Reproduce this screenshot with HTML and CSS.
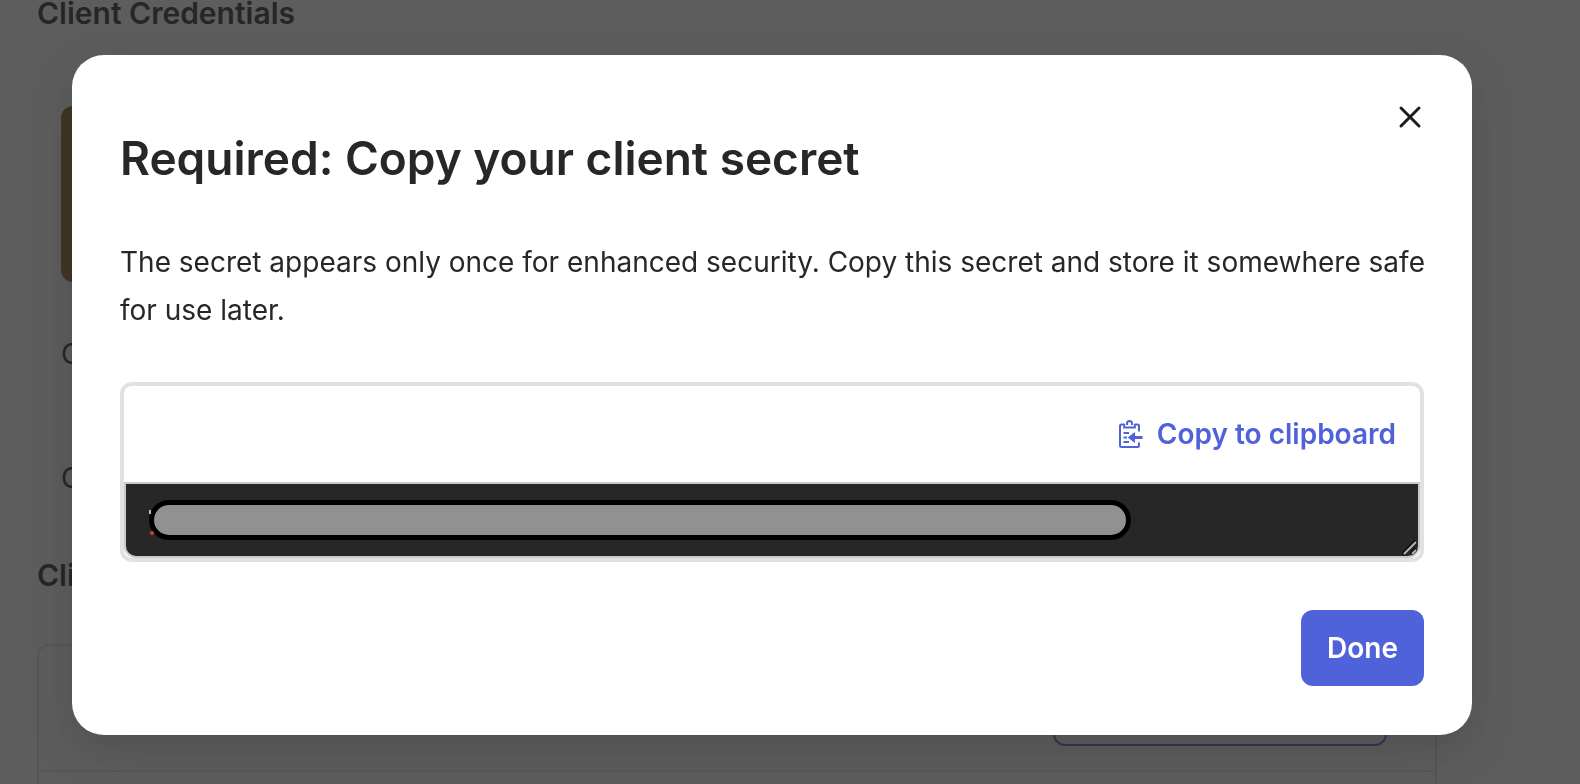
FILE: index.html
```
<!DOCTYPE html>
<html lang="en">
<head>
    <meta charset="UTF-8">
    <meta name="viewport" content="width=device-width, initial-scale=1.0">
    <title>Client Credentials</title>
    <link rel="stylesheet" href="styles.css">
</head>
<body>

    <!-- Page behind the dialog -->
    <main class="page">
        <h2 class="section-title">Client Credentials</h2>
        <div class="credentials">
            <div class="notice"></div>
            <div class="field">Client ID</div>
            <div class="field">Client secret</div>
        </div>

        <h2 class="section-title">Client Secrets</h2>
        <div class="panel">
            <div class="panel-head">
                <button class="outline-button" type="button" aria-label="New secret"></button>
            </div>
        </div>
    </main>

    <!-- Secret dialog -->
    <div class="overlay">
        <div class="modal" role="dialog" aria-modal="true" aria-labelledby="modalTitle">
            <div class="modal-top">
                <button class="close-button" type="button" aria-label="Close">
                    <svg width="24" height="24" viewBox="0 0 24 24" fill="none" stroke="currentColor" stroke-width="3" stroke-linecap="round">
                        <path d="M3 3l18 18M21 3l-18 18"/>
                    </svg>
                </button>
            </div>
            <h1 class="modal-title" id="modalTitle">Required: Copy your client secret</h1>
            <p class="modal-text">The secret appears only once for enhanced security. Copy this secret and store it somewhere safe for use later.</p>

            <div class="secret-box">
                <div class="secret-toolbar">
                    <button class="copy-button" type="button">
                        <svg width="24" height="28" viewBox="0 0 24 28" fill="none" stroke="currentColor" stroke-width="2">
                            <path d="M5.5 4.5H2.5Q1 4.5 1 6V25.5Q1 27 2.5 27H18.5Q20 27 20 25.5V22.5M15.5 4.5H18.5Q20 4.5 20 6V11.5"/>
                            <path d="M5.2 4V7.5H15.8V4"/>
                            <path d="M8 5V3.5Q8 1 10.5 1T13 3.500V5"/>
                            <path d="M4.5 13h5.5M4.5 17.5h3.5M4.5 22h5.5"/>
                            <path d="M23.5 17.5H15" stroke-width="3"/>
                            <path d="M8.7 17.5L16 12V23Z" fill="currentColor" stroke="none"/>
                        </svg>
                        Copy to clipboard
                    </button>
                </div>
                <div class="secret-value">
                    <textarea class="secret-input" rows="1" aria-label="Client secret" readonly></textarea>
                    <span class="secret-mask"></span>
                    <svg class="resize-grip" width="16" height="16" viewBox="0 0 16 16" fill="none">
                        <path d="M1 14L14 1M9 14L14 9" stroke="#111" stroke-width="4"/>
                        <path d="M2 14L14 2M10 14L14 10" stroke="#b4b4b4" stroke-width="2"/>
                    </svg>
                </div>
            </div>

            <div class="modal-actions">
                <button class="done-button" type="button">Done</button>
            </div>
        </div>
    </div>

</body>
</html>
```
FILE: styles.css
```
* {
    box-sizing: border-box;
}

body {
    margin: 0;
    height: 100vh;
    overflow: hidden;
    background: #fff;
    color: #272727;
    font-family: Inter, "Liberation Sans", sans-serif;
    font-size: 28px;
}

button {
    font: inherit;
    cursor: pointer;
}

/* Page behind the dialog */
.page {
    height: 100vh;
    padding: 0 143px 0 37px;
    overflow: hidden;
}

.section-title {
    margin: 0;
    font-size: 30px;
    font-weight: 600;
    line-height: 26px;
}

.credentials {
    padding: 80px 24px 72px;
}

.notice {
    height: 176px;
    margin-bottom: 52px;
    border-radius: 12px;
    background: #8b611f;
}

.field {
    height: 124px;
    line-height: 40px;
}

.field:last-child {
    height: 32px;
}

.panel {
    height: 200px;
    margin-top: 56px;
    border: 2px solid #e1e1e1;
    border-radius: 12px;
}

.panel-head {
    display: flex;
    justify-content: flex-end;
    padding: 24px 48px;
    border-bottom: 2px solid #e1e1e1;
}

.outline-button {
    width: 334px;
    height: 76px;
    border: 2px solid #4f62d9;
    border-radius: 12px;
    background: #fff;
}

/* Dialog */
.overlay {
    position: fixed;
    inset: 0;
    padding: 55px 108px 49px 72px;
    background: rgba(39, 39, 39, 0.75);
}

.modal {
    padding: 48px 48px 49px;
    border-radius: 32px;
    background: #fff;
    box-shadow: 0 16px 48px rgba(0, 0, 0, 0.15);
}

.modal-top {
    display: flex;
    justify-content: flex-end;
    height: 27px;
}

.close-button {
    display: flex;
    align-items: center;
    height: 28px;
    padding: 2px;
    border: none;
    background: none;
    color: #1d1d21;
}

.modal-title {
    margin: 0 0 52px;
    font-size: 46px;
    font-weight: 600;
    line-height: 56px;
}

.modal-text {
    margin: 0 -8px 48px 0;
    line-height: 48px;
}

.secret-box {
    border: 4px solid #e1e1e1;
    border-radius: 12px;
}

.secret-toolbar {
    display: flex;
    align-items: center;
    justify-content: flex-end;
    height: 96px;
    padding: 0 24px;
}

.copy-button {
    display: flex;
    align-items: center;
    gap: 14px;
    padding: 0;
    border: none;
    background: none;
    color: #4f62d9;
    font-weight: 600;
}

.secret-value {
    position: relative;
}

.secret-input {
    display: block;
    width: 100%;
    height: 76px;
    padding: 16px 24px;
    border: 2px solid #cacaca;
    border-radius: 0 0 12px 12px;
    background: #272727;
    color: #fff;
    font: inherit;
    outline: none;
    resize: none;
}

/* Covers the secret */
.secret-mask {
    position: absolute;
    top: 18px;
    left: 25px;
    right: 289px;
    height: 40px;
    border: 5px solid #000;
    border-radius: 20px;
    background: #919191;
}

/* Edges of the text that show beside the mask */
.secret-mask::before,
.secret-mask::after {
    content: "";
    position: absolute;
    left: -5px;
    width: 2px;
    height: 4px;
    background: #8fd6a0;
}

.secret-mask::before {
    top: 5px;
}

.secret-mask::after {
    top: 26px;
    left: -4px;
    width: 4px;
    border-radius: 2px;
    background: #c4443a;
}

.resize-grip {
    position: absolute;
    right: 2px;
    bottom: 2px;
}

.modal-actions {
    display: flex;
    justify-content: flex-end;
    margin-top: 48px;
}

.done-button {
    height: 76px;
    padding: 0 26px;
    border: none;
    border-radius: 12px;
    background: #4f62d9;
    color: #fff;
    font-weight: 600;
}
```
